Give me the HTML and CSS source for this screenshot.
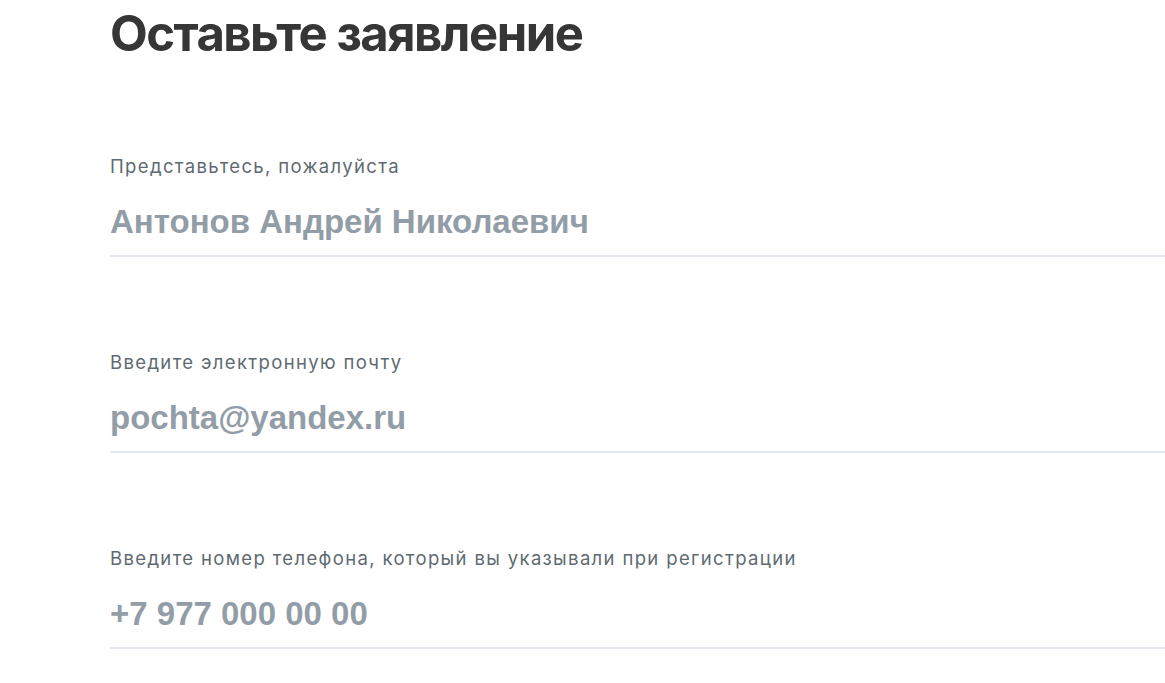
FILE: index.html
```html
<!DOCTYPE html>
<html lang="ru">
<head>
<meta charset="utf-8">
<title>Оставьте заявление</title>
<link rel="stylesheet" href="styles.css">
</head>
<body>
<main class="page">
  <h1 class="title">Оставьте заявление</h1>
  <form class="form">
    <label class="field">
      <span class="field-label">Представьтесь, пожалуйста</span>
      <input class="field-input" type="text" placeholder="Антонов Андрей Николаевич">
    </label>
    <label class="field">
      <span class="field-label">Введите электронную почту</span>
      <input class="field-input" type="email" placeholder="pochta@yandex.ru">
    </label>
    <label class="field">
      <span class="field-label">Введите номер телефона, который вы указывали при регистрации</span>
      <input class="field-input" type="tel" placeholder="+7 977 000 00 00">
    </label>
  </form>
</main>
</body>
</html>
```
FILE: styles.css
```css
html, body {
  margin: 0;
  padding: 0;
  background: #ffffff;
  overflow: hidden;
}
.page {
  padding-left: 110px;
  padding-top: 3px;
  width: 1200px;
}
.title {
  margin: 0;
  font-family: Inter, "Noto Sans", sans-serif;
  font-weight: 700;
  font-size: 49px;
  line-height: 62px;
  color: #363636;
  letter-spacing: -1.5px;
}
.form {
  display: flex;
  flex-direction: column;
  gap: 94px;
  margin-top: 90px;
}
.field {
  display: flex;
  flex-direction: column;
  gap: 26px;
  border-bottom: 2px solid #e4e8ef;
  padding-bottom: 14px;
}
.field-label {
  font-family: Inter, "Noto Sans", sans-serif;
  font-size: 18.5px;
  line-height: 22px;
  letter-spacing: 1.35px;
  color: #5e6a71;
}
.field-input {
  display: block;
  border: 0;
  outline: none;
  padding: 0;
  margin: 0;
  height: 38px;
  width: 100%;
  background: transparent;
  font-family: "Liberation Sans", Arial, sans-serif;
  font-weight: 700;
  font-size: 33px;
  line-height: 38px;
  color: #3a3f44;
}
.field-input::placeholder {
  color: #929da7;
  opacity: 1;
}
```
